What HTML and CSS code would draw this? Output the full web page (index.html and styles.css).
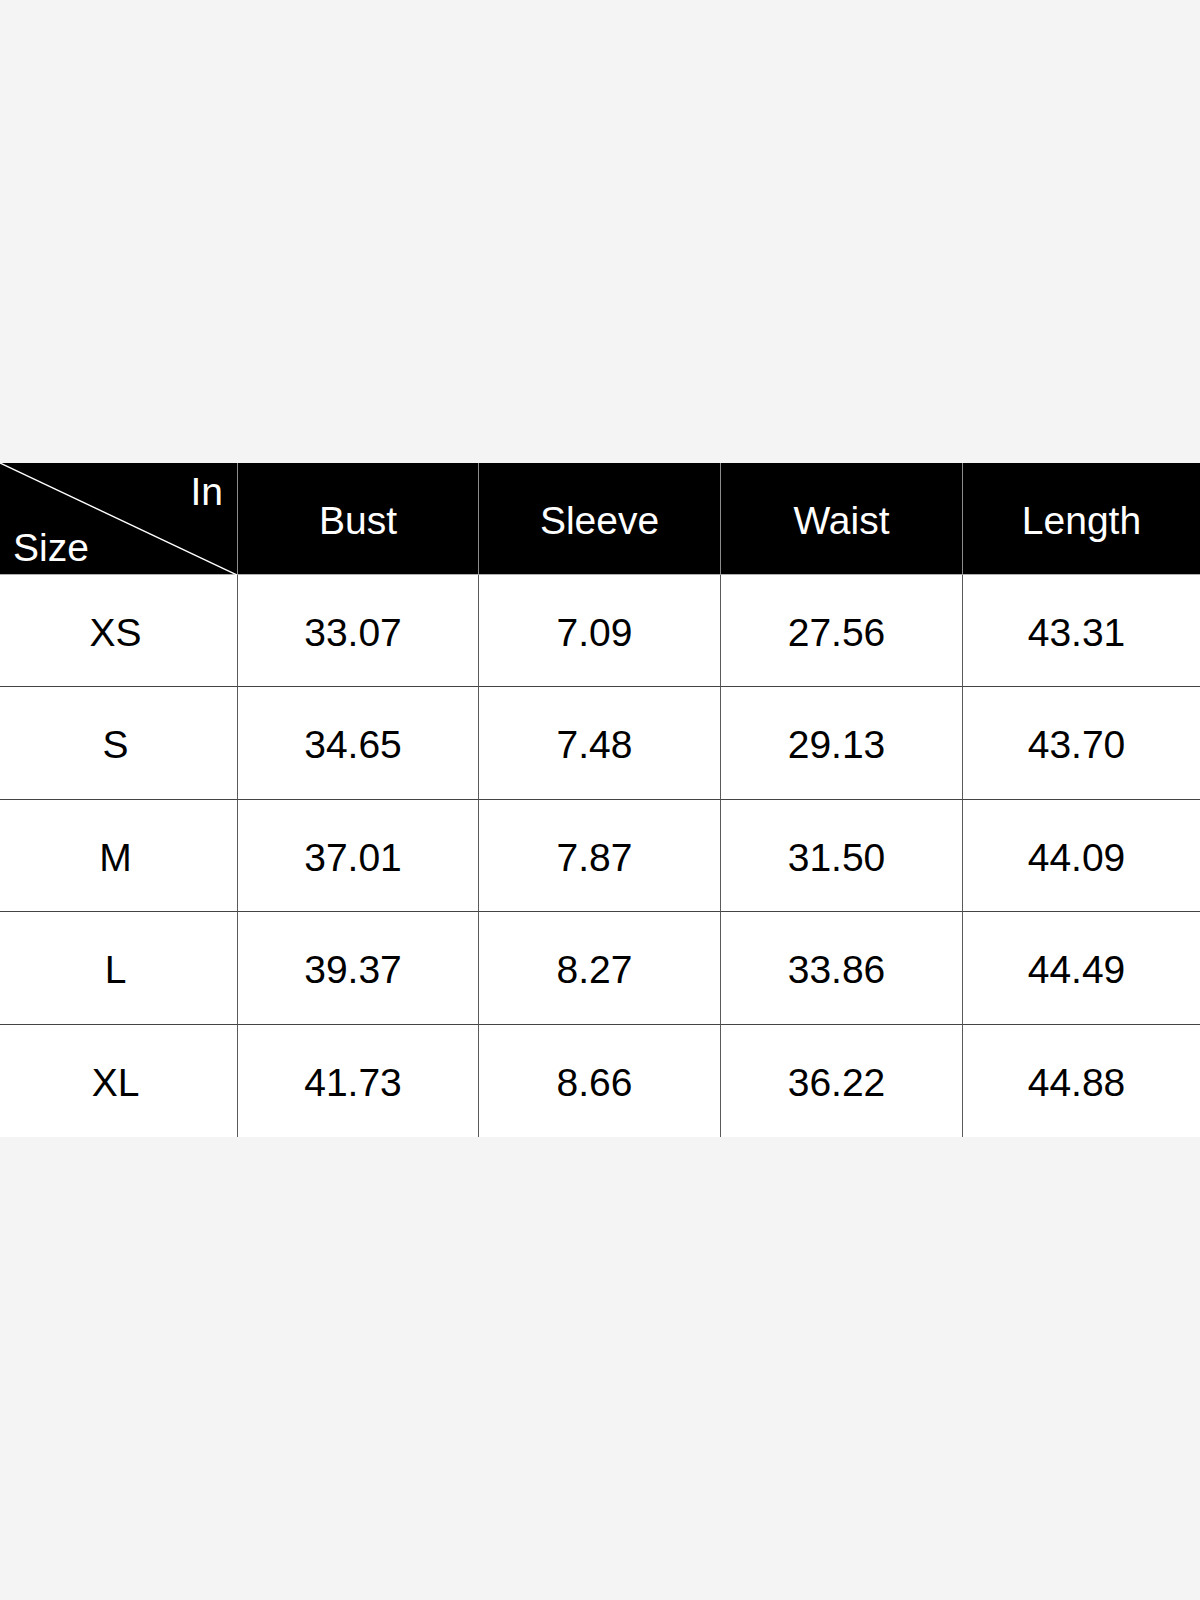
FILE: index.html
```html
<!DOCTYPE html>
<html>
<head>
<meta charset="utf-8">
<link rel="stylesheet" href="styles.css">
</head>
<body>
<div class="page">
  <div class="chart">
    <div class="hcell corner">
      <svg class="diag" viewBox="0 0 237 112" preserveAspectRatio="none"><line x1="0" y1="0" x2="237" y2="112" stroke="#ffffff" stroke-width="1.4"/></svg>
      <span class="in">In</span>
      <span class="size">Size</span>
    </div>
    <div class="hcell">Bust</div>
    <div class="hcell">Sleeve</div>
    <div class="hcell">Waist</div>
    <div class="hcell">Length</div>

    <div class="cell first">XS</div><div class="cell">33.07</div><div class="cell">7.09</div><div class="cell">27.56</div><div class="cell">43.31</div>
    <div class="cell first">S</div><div class="cell">34.65</div><div class="cell">7.48</div><div class="cell">29.13</div><div class="cell">43.70</div>
    <div class="cell first">M</div><div class="cell">37.01</div><div class="cell">7.87</div><div class="cell">31.50</div><div class="cell">44.09</div>
    <div class="cell first">L</div><div class="cell">39.37</div><div class="cell">8.27</div><div class="cell">33.86</div><div class="cell">44.49</div>
    <div class="cell first last">XL</div><div class="cell last">41.73</div><div class="cell last">8.66</div><div class="cell last">36.22</div><div class="cell last">44.88</div>
  </div>
</div>
</body>
</html>
```

FILE: styles.css
```css
html, body {
  margin: 0;
  padding: 0;
  background: #f4f4f4;
}
.page {
  width: 1200px;
  height: 1600px;
  padding-top: 463px;
  box-sizing: border-box;
  background: #f4f4f4;
  font-family: "Liberation Sans", Arial, sans-serif;
}
.chart {
  display: grid;
  grid-template-columns: 237px 241px 242px 242px 1fr;
  grid-template-rows: 112px 112px 113px 112px 113px 112px;
  background: #ffffff;
}
.hcell {
  background: #000000;
  color: #ffffff;
  font-size: 39px;
  display: flex;
  align-items: center;
  justify-content: center;
  padding-top: 4px;
  border-left: 1px solid #8c8c8c;
  border-bottom: 1px solid #b0b0b0;
  box-sizing: border-box;
}
.corner {
  position: relative;
  border-left: none;
  display: block;
  padding-top: 0;
}
.diag {
  position: absolute;
  left: 0;
  top: 0;
  width: 237px;
  height: 112px;
}
.in {
  position: absolute;
  right: 14px;
  top: 9px;
  line-height: 1;
}
.size {
  position: absolute;
  left: 13px;
  top: 65px;
  line-height: 1;
}
.cell {
  font-size: 39px;
  color: #000000;
  display: flex;
  align-items: center;
  justify-content: center;
  padding-top: 4px;
  padding-right: 10px;
  border-left: 1px solid #5a5a5a;
  border-bottom: 1px solid #444444;
  box-sizing: border-box;
}
.cell.first {
  border-left: none;
  padding-right: 6px;
}
.cell.last {
  border-bottom: none;
}
```
